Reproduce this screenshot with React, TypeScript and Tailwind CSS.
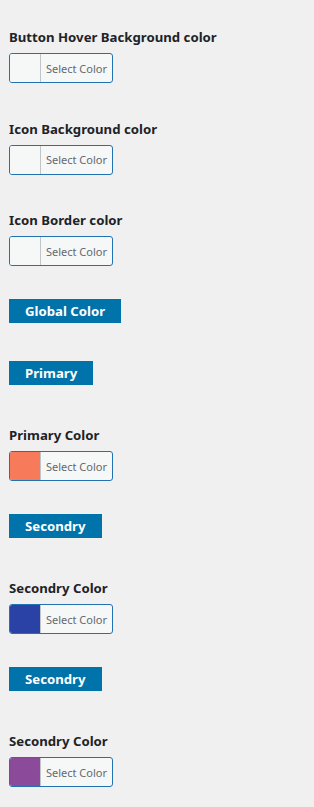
const font = { fontFamily: '"Noto Sans", "Open Sans", sans-serif' }

type Item =
  | { kind: 'field'; label: string; swatch: string }
  | { kind: 'badge'; label: string }

const items: Item[] = [
  { kind: 'field', label: 'Button Hover Background color', swatch: 'bg-[#f6f7f7]' },
  { kind: 'field', label: 'Icon Background color', swatch: 'bg-[#f6f7f7]' },
  { kind: 'field', label: 'Icon Border color', swatch: 'bg-[#f6f7f7]' },
  { kind: 'badge', label: 'Global Color' },
  { kind: 'badge', label: 'Primary' },
  { kind: 'field', label: 'Primary Color', swatch: 'bg-[#f77b5a]' },
  { kind: 'badge', label: 'Secondry' },
  { kind: 'field', label: 'Secondry Color', swatch: 'bg-[#2a41a6]' },
  { kind: 'badge', label: 'Secondry' },
  { kind: 'field', label: 'Secondry Color', swatch: 'bg-[#8c4a9b]' },
]

function ColorField({ label, swatch }: { label: string; swatch: string }) {
  return (
    <div className="flex flex-col items-start">
      <div className="text-[13.2px] leading-[20px] font-bold text-[#1d2327]">{label}</div>
      <button className="mt-[6px] flex h-[30px] w-[104px] overflow-hidden rounded-[3px] border border-[#2271b1] bg-[#f6f7f7]">
        <span className={`h-full w-[31px] border-r border-[#c3c4c7] ${swatch}`} />
        <span className="flex-1 self-center text-center text-[11px] leading-none text-[#646970]">Select Color</span>
      </button>
    </div>
  )
}

function Badge({ label }: { label: string }) {
  return (
    <div className="inline-block self-start bg-[#0073aa] px-[16px] text-[13.2px] leading-[24px] font-bold text-white">
      {label}
    </div>
  )
}

export default function App() {
  return (
    <div className="min-h-[807px] w-[314px] bg-[#f0f0f0] px-[9px] pt-[27px]" style={font}>
      <div className="flex flex-col">
        {items.map((item, i) => {
          const prev = items[i - 1]
          let mt = 'mt-0'
          if (i > 0) {
            if (item.kind === 'field' && prev.kind === 'field') mt = 'mt-[35.5px]'
            else if (item.kind === 'badge' && prev.kind === 'field') mt = 'mt-[33px]'
            else if (item.kind === 'badge' && prev.kind === 'badge') mt = 'mt-[38px]'
            else mt = 'mt-[40px]'
          }
          return (
            <div key={i} className={`flex flex-col ${mt}`}>
              {item.kind === 'field' ? <ColorField label={item.label} swatch={item.swatch} /> : <Badge label={item.label} />}
            </div>
          )
        })}
      </div>
    </div>
  )
}
